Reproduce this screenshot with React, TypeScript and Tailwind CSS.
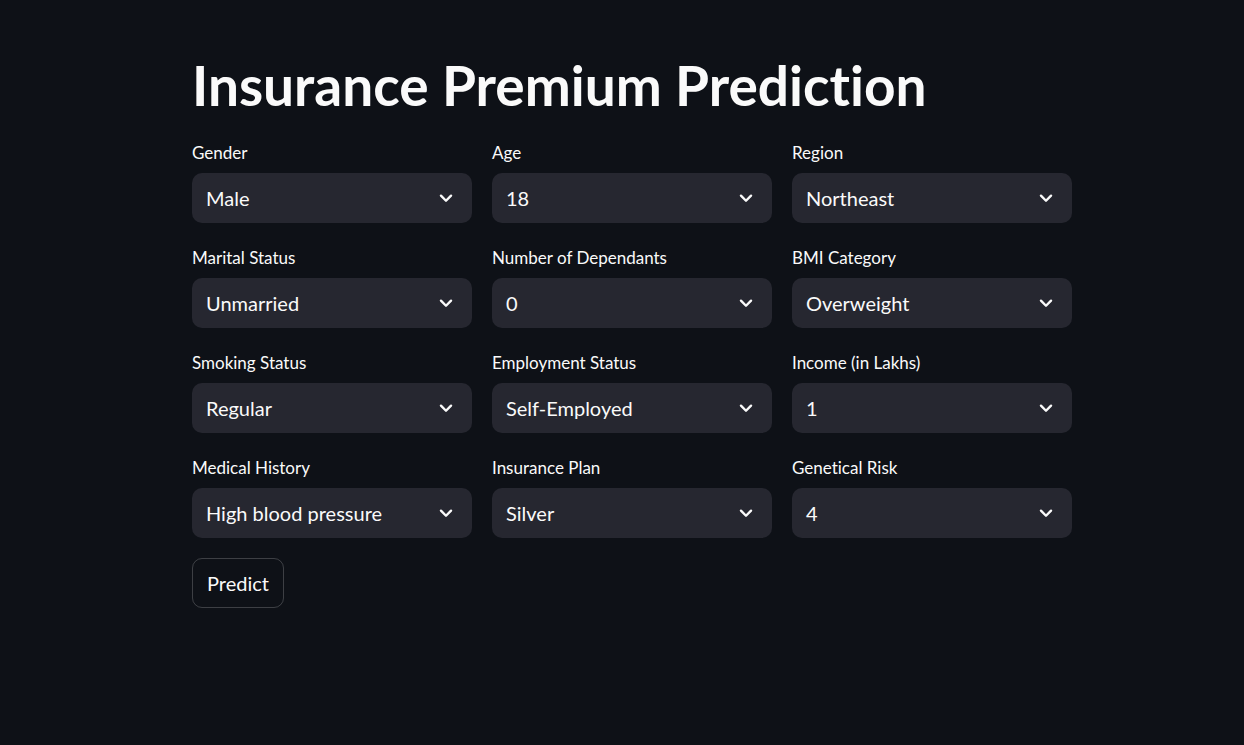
import React from "react";

type Field = { label: string; value: string };

const fields: Field[] = [
  { label: "Gender", value: "Male" },
  { label: "Age", value: "18" },
  { label: "Region", value: "Northeast" },
  { label: "Marital Status", value: "Unmarried" },
  { label: "Number of Dependants", value: "0" },
  { label: "BMI Category", value: "Overweight" },
  { label: "Smoking Status", value: "Regular" },
  { label: "Employment Status", value: "Self-Employed" },
  { label: "Income (in Lakhs)", value: "1" },
  { label: "Medical History", value: "High blood pressure" },
  { label: "Insurance Plan", value: "Silver" },
  { label: "Genetical Risk", value: "4" },
];

const Chevron = () => (
  <svg width="22" height="22" viewBox="0 0 24 24" fill="none" className="shrink-0">
    <path d="M6.5 9.5l5.5 5.5 5.5-5.5" stroke="#fafafa" strokeWidth="2.6" strokeLinecap="round" strokeLinejoin="round" />
  </svg>
);

const SelectBox: React.FC<Field> = ({ label, value }) => {
  return (
    <div className="flex flex-col">
      <label className="text-[17px] leading-[22px] h-[31px] text-[#fafafa]">{label}</label>
      <div className="h-[50px] rounded-[10px] bg-[#262730] flex items-center justify-between pl-[14px] pr-[15px]">
        <span className="text-[20px] leading-[26px] text-[#fafafa]">{value}</span>
        <Chevron />
      </div>
    </div>
  );
};

export default function App() {
  return (
    <div
      className="min-h-[745px] w-full bg-[#0e1117] text-[#fafafa] [font-variant-ligatures:none]"
      style={{ fontFamily: "Lato, 'Noto Sans', sans-serif" }}
    >
      <div className="w-[880px] ml-[192px] pt-[51px]">
        <h1 className="text-[55px] font-bold leading-[68px] mb-[23px] tracking-[0px]">
          Insurance Premium Prediction
        </h1>
        <div className="grid grid-cols-3 gap-x-[20px] gap-y-[24px]">
          {fields.map((f) => (
            <SelectBox key={f.label} {...f} />
          ))}
        </div>
        <button className="mt-[20px] h-[50px] px-[14px] rounded-[10px] border border-[#fafafa33] text-[20px] text-[#fafafa] bg-transparent">
          Predict
        </button>
      </div>
    </div>
  );
}
